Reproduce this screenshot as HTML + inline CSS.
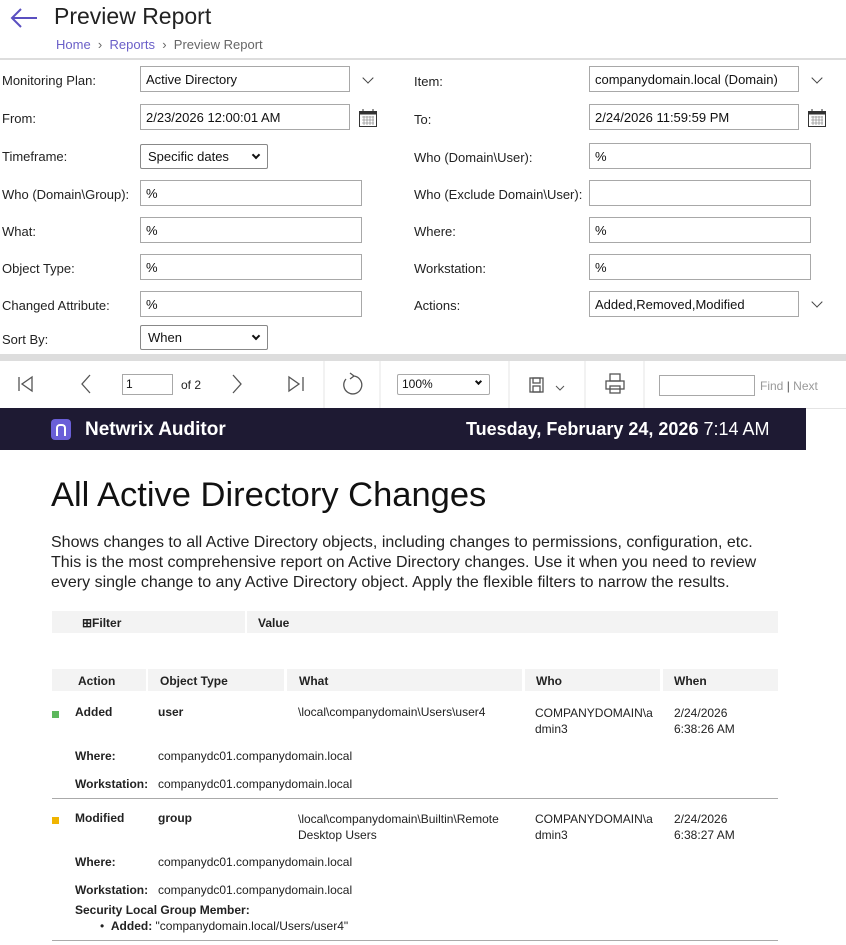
<!DOCTYPE html>
<html><head><meta charset="utf-8"><style>
*{box-sizing:border-box;margin:0;padding:0}
body{width:846px;height:945px;overflow:hidden;background:#fff;font-family:"Liberation Sans",sans-serif;color:#222;position:relative}
.a{position:absolute;white-space:nowrap}
.lbl{font-size:13px;color:#222}
.in{position:absolute;border:1px solid #a8a8a8;background:#fff;font-size:13px;padding:5px 0 0 5px;color:#111;height:26px}
.sel{position:absolute;border:1px solid #888;background:#fff;font-size:13px;padding:4px 0 0 7px;color:#111;height:25px;border-radius:2px}
.sa{position:absolute;right:8px;top:7px;width:6px;height:6px;border-right:2px solid #111;border-bottom:2px solid #111;transform:rotate(45deg)}
.chev{position:absolute;width:8px;height:8px;border-right:1.3px solid #444;border-bottom:1.3px solid #444;transform:rotate(45deg)}
.r{font-family:"Liberation Sans Narrow","Liberation Sans",sans-serif;font-size:12px;color:#222}
.b{font-weight:bold}
.th{position:absolute;top:669px;height:22px;background:#f3f3f3;font-size:12px;font-weight:bold;padding:5px 0 0 0}
</style></head><body>
<svg class="a" style="left:10px;top:8px" width="28" height="20" viewBox="0 0 28 20"><path d="M2 10H27M11 1L2 10L11 19" stroke="#5a4fc0" stroke-width="2" fill="none"/></svg>
<div class="a" style="left:54px;top:3px;font-size:23px;color:#222">Preview Report</div>
<div class="a" style="left:56px;top:37px;font-size:13px;color:#666"><span style="color:#6a5fc8">Home</span> &nbsp;›&nbsp; <span style="color:#6a5fc8">Reports</span> &nbsp;›&nbsp; Preview Report</div>
<div class="a" style="left:0;top:58px;width:846px;height:2px;background:#ddd"></div>

<div class="a lbl" style="left:2px;top:73px">Monitoring Plan:</div>
<div class="in" style="left:140px;top:66px;width:210px">Active Directory</div><div class="chev" style="left:364px;top:74px"></div>
<div class="a lbl" style="left:2px;top:111px">From:</div>
<div class="in" style="left:140px;top:104px;width:210px">2/23/2026 12:00:01 AM</div>
<div class="a lbl" style="left:2px;top:149px">Timeframe:</div>
<div class="sel" style="left:140px;top:144px;width:128px">Specific dates <span class="sa"></span></div>
<div class="a lbl" style="left:2px;top:187px">Who (Domain\Group):</div>
<div class="in" style="left:140px;top:180px;width:222px">%</div>
<div class="a lbl" style="left:2px;top:224px">What:</div>
<div class="in" style="left:140px;top:217px;width:222px">%</div>
<div class="a lbl" style="left:2px;top:261px">Object Type:</div>
<div class="in" style="left:140px;top:254px;width:222px">%</div>
<div class="a lbl" style="left:2px;top:298px">Changed Attribute:</div>
<div class="in" style="left:140px;top:291px;width:222px">%</div>
<div class="a lbl" style="left:2px;top:332px">Sort By:</div>
<div class="sel" style="left:140px;top:325px;width:128px">When <span class="sa"></span></div>

<div class="a lbl" style="left:414px;top:74px">Item:</div>
<div class="in" style="left:589px;top:66px;width:210px">companydomain.local (Domain)</div><div class="chev" style="left:813px;top:74px"></div>
<div class="a lbl" style="left:414px;top:112px">To:</div>
<div class="in" style="left:589px;top:104px;width:210px">2/24/2026 11:59:59 PM</div>
<div class="a lbl" style="left:414px;top:150px">Who (Domain\User):</div>
<div class="in" style="left:589px;top:143px;width:222px">%</div>
<div class="a lbl" style="left:414px;top:187px">Who (Exclude Domain\User):</div>
<div class="in" style="left:589px;top:180px;width:222px"></div>
<div class="a lbl" style="left:414px;top:224px">Where:</div>
<div class="in" style="left:589px;top:217px;width:222px">%</div>
<div class="a lbl" style="left:414px;top:261px">Workstation:</div>
<div class="in" style="left:589px;top:254px;width:222px">%</div>
<div class="a lbl" style="left:414px;top:298px">Actions:</div>
<div class="in" style="left:589px;top:291px;width:210px">Added,Removed,Modified</div><div class="chev" style="left:813px;top:298px"></div>

<svg class="a" style="left:358px;top:108px" width="20" height="20" viewBox="0 0 20 20"><rect x="1.5" y="3.5" width="17" height="15" fill="none" stroke="#333"/><rect x="1.5" y="3.5" width="17" height="3" fill="#333"/><path d="M5 1v4M15 1v4" stroke="#333"/><path d="M4 9h12M4 12h12M4 15h12M6 8v9M9 8v9M12 8v9M15 8v9" stroke="#777" stroke-width=".6"/></svg>
<svg class="a" style="left:807px;top:108px" width="20" height="20" viewBox="0 0 20 20"><rect x="1.5" y="3.5" width="17" height="15" fill="none" stroke="#333"/><rect x="1.5" y="3.5" width="17" height="3" fill="#333"/><path d="M5 1v4M15 1v4" stroke="#333"/><path d="M4 9h12M4 12h12M4 15h12M6 8v9M9 8v9M12 8v9M15 8v9" stroke="#777" stroke-width=".6"/></svg>

<div class="a" style="left:0;top:354px;width:846px;height:7px;background:#ddd"></div>
<div class="a" style="left:0;top:408px;width:846px;height:1px;background:#e4e4e4"></div>
<svg class="a" style="left:0;top:361px" width="846" height="47" viewBox="0 0 846 47" fill="none" stroke="#555" stroke-width="1.3">
<path d="M19 16v14M32 16l-10 7 10 7z"/>
<path d="M90 14l-8 9 8 9"/>
<path d="M233 14l8 9-8 9"/>
<path d="M289 16l10 7-10 7zM303 16v14"/>
<path d="M346 18a9 9 0 1 0 8-3M350 12l4 3-4 3"/>
<rect x="530" y="17" width="13" height="14"/><rect x="533" y="17" width="7" height="5"/><rect x="533" y="25" width="7" height="6"/>
<path d="M556 25l4 4 4-4" stroke-width="1"/>
<rect x="610" y="13" width="10" height="7"/><rect x="606" y="20" width="18" height="8"/><rect x="610" y="25" width="10" height="7"/>
<path d="M324 0v47M380 0v47M509 0v47M585 0v47M644 0v47" stroke="#e4e4e4" stroke-width="1"/>
</svg>
<div class="in" style="left:122px;top:374px;width:51px;height:21px;padding:2px 3px;font-size:12px">1</div>
<div class="a" style="left:181px;top:378px;font-size:12px">of 2</div>
<div class="sel" style="left:397px;top:374px;width:93px;height:21px;padding:2px 4px;font-size:12px;border-color:#aaa">100%<span class="sa" style="top:4px;width:5px;height:5px"></span></div>
<div class="in" style="left:659px;top:375px;width:96px;height:21px"></div>
<div class="a" style="left:760px;top:379px;font-size:12px;color:#999">Find <span style="color:#555">|</span> Next</div>

<div class="a" style="left:0;top:408px;width:806px;height:42px;background:#1e1a33"></div>
<div class="a" style="left:51px;top:419px;width:20px;height:21px;background:#6a5fd8;border-radius:4px"></div>
<div class="a" style="left:56px;top:424px;width:10px;height:12px;border:2px solid #fff;border-bottom:none;border-radius:4px 4px 0 0"></div>
<div class="a" style="left:85px;top:419px;font-size:19px;font-weight:bold;color:#fff">Netwrix Auditor</div>
<div class="a" style="left:466px;top:419px;font-size:18px;color:#fff"><b>Tuesday, February 24, 2026</b> 7:14 AM</div>

<div class="a" style="left:51px;top:476px;font-size:34.5px;color:#111">All Active Directory Changes</div>
<div class="a" style="left:51px;top:533px;font-size:16px;line-height:20px;color:#222">Shows changes to all Active Directory objects, including changes to permissions, configuration, etc.<br>This is the most comprehensive report on Active Directory changes. Use it when you need to review<br>every single change to any Active Directory object. Apply the flexible filters to narrow the results.</div>

<div class="a" style="left:52px;top:611px;width:193px;height:22px;background:#f3f3f3"></div>
<div class="a" style="left:247px;top:611px;width:531px;height:22px;background:#f3f3f3"></div>
<div class="a r b" style="left:82px;top:616px">⊞Filter</div>
<div class="a r b" style="left:258px;top:616px">Value</div>

<div class="th" style="left:52px;width:94px;padding-left:26px">Action</div>
<div class="th" style="left:148px;width:136px;padding-left:12px">Object Type</div>
<div class="th" style="left:287px;width:235px;padding-left:12px">What</div>
<div class="th" style="left:525px;width:135px;padding-left:11px">Who</div>
<div class="th" style="left:663px;width:115px;padding-left:11px">When</div>

<div class="a" style="left:52px;top:711px;width:7px;height:7px;background:#5cb85c"></div>
<div class="a r b" style="left:75px;top:705px">Added</div>
<div class="a r b" style="left:158px;top:705px">user</div>
<div class="a r" style="left:298px;top:705px">\local\companydomain\Users\user4</div>
<div class="a r" style="left:535px;top:705px;line-height:16px">COMPANYDOMAIN\a<br>dmin3</div>
<div class="a r" style="left:674px;top:705px;line-height:16px">2/24/2026<br>6:38:26 AM</div>
<div class="a r b" style="left:75px;top:749px">Where:</div>
<div class="a r" style="left:158px;top:749px">companydc01.companydomain.local</div>
<div class="a r b" style="left:75px;top:777px">Workstation:</div>
<div class="a r" style="left:158px;top:777px">companydc01.companydomain.local</div>
<div class="a" style="left:52px;top:798px;width:726px;height:1px;background:#aaa"></div>

<div class="a" style="left:52px;top:817px;width:7px;height:7px;background:#f0b400"></div>
<div class="a r b" style="left:75px;top:811px">Modified</div>
<div class="a r b" style="left:158px;top:811px">group</div>
<div class="a r" style="left:298px;top:811px;line-height:16px">\local\companydomain\Builtin\Remote<br>Desktop Users</div>
<div class="a r" style="left:535px;top:811px;line-height:16px">COMPANYDOMAIN\a<br>dmin3</div>
<div class="a r" style="left:674px;top:811px;line-height:16px">2/24/2026<br>6:38:27 AM</div>
<div class="a r b" style="left:75px;top:855px">Where:</div>
<div class="a r" style="left:158px;top:855px">companydc01.companydomain.local</div>
<div class="a r b" style="left:75px;top:883px">Workstation:</div>
<div class="a r" style="left:158px;top:883px">companydc01.companydomain.local</div>
<div class="a r b" style="left:75px;top:903px">Security Local Group Member:</div>
<div class="a r" style="left:100px;top:919px">• &nbsp;<b>Added:</b> "companydomain.local/Users/user4"</div>
<div class="a" style="left:52px;top:940px;width:726px;height:1px;background:#aaa"></div>
</body></html>
